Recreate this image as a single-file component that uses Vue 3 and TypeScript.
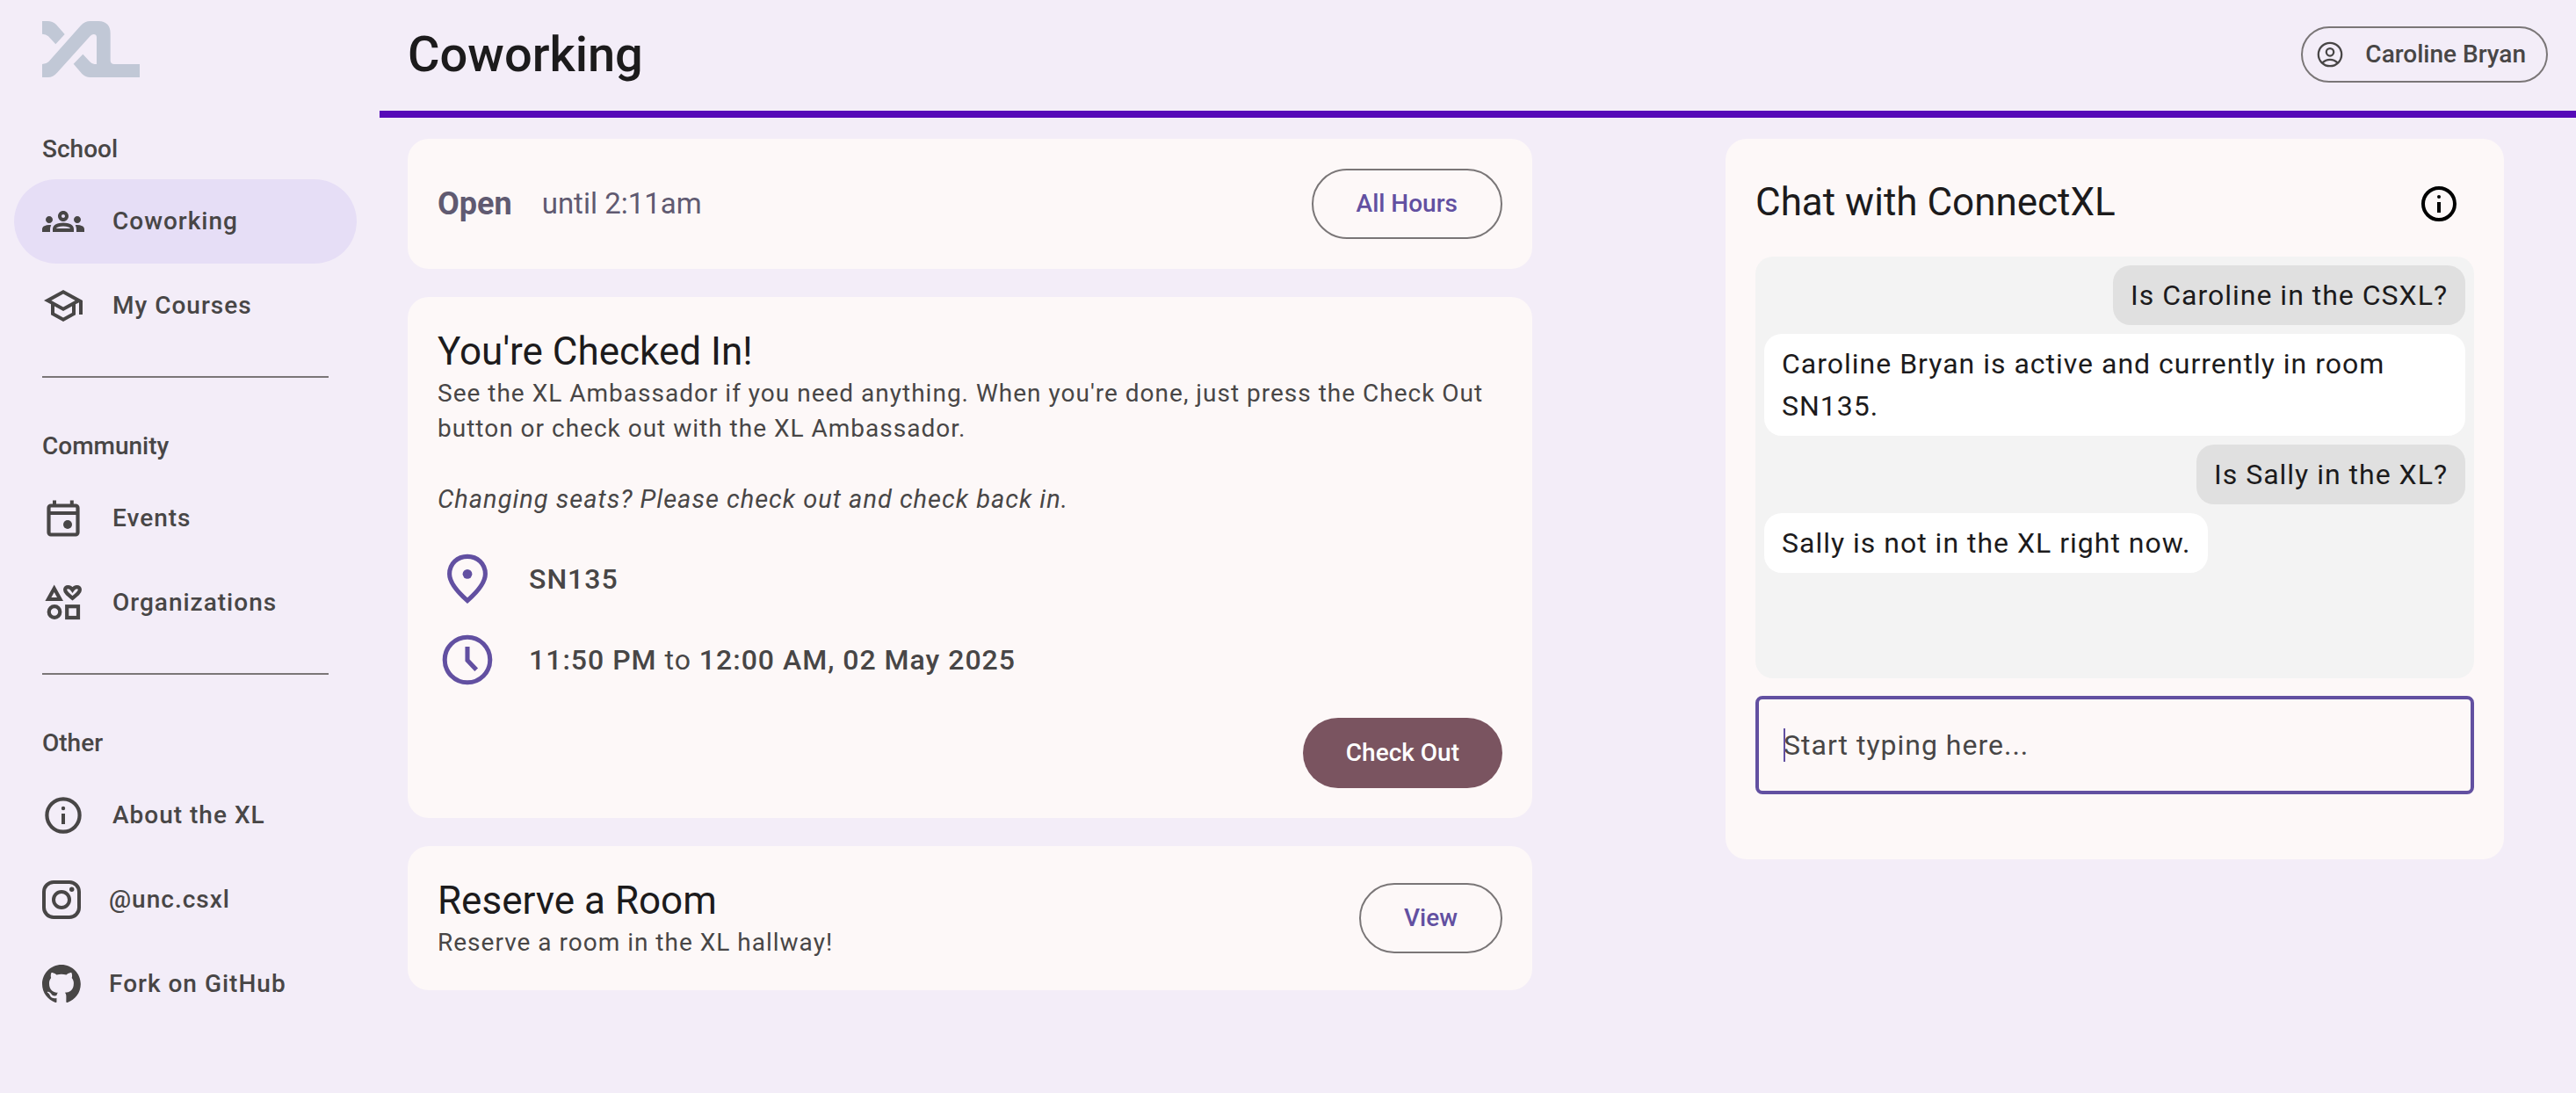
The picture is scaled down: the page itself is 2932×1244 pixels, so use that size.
<script setup lang="ts">
import { ref } from 'vue'

interface NavItem {
  label: string
  icon: string
  brand?: boolean
  active?: boolean
}

interface NavSection {
  title: string
  items: NavItem[]
}

interface Message {
  text: string
  from: 'user' | 'bot'
}

const sections: NavSection[] = [
  {
    title: 'School',
    items: [
      { label: 'Coworking', icon: 'groups', active: true },
      { label: 'My Courses', icon: 'school' },
    ],
  },
  {
    title: 'Community',
    items: [
      { label: 'Events', icon: 'event' },
      { label: 'Organizations', icon: 'category' },
    ],
  },
  {
    title: 'Other',
    items: [
      { label: 'About the XL', icon: 'info' },
      { label: '@unc.csxl', icon: 'instagram', brand: true },
      { label: 'Fork on GitHub', icon: 'github', brand: true },
    ],
  },
]

const messages: Message[] = [
  { text: 'Is Caroline in the CSXL?', from: 'user' },
  { text: 'Caroline Bryan is active and currently in room SN135.', from: 'bot' },
  { text: 'Is Sally in the XL?', from: 'user' },
  { text: 'Sally is not in the XL right now.', from: 'bot' },
]

const draft = ref('')
</script>

<template>
  <div class="shell">
    <aside class="sidebar">
      <a class="logo" href="#" aria-label="XL home">
        <svg viewBox="144 72 333 192" aria-hidden="true">
          <path d="M144 72H162Q180 72 192 84L221 117L190 151L165 124Q157 117 144 116Z" />
          <path
            d="M144 219Q158 219 166 211L276 87Q290 72 308 72H336Q377 74 377 114V208Q378 219 390 219H477V264H308Q292 264 280 252L251 218L283 185L307 211Q314 219 322 219H330V126Q329 117 320 117Q314 117 308 123L195 248Q181 264 164 264H144Z"
          />
        </svg>
      </a>

      <nav>
        <section v-for="section in sections" :key="section.title" class="nav-section">
          <h2>{{ section.title }}</h2>
          <a
            v-for="item in section.items"
            :key="item.label"
            href="#"
            class="nav-item"
            :class="{ active: item.active }"
          >
            <svg v-if="item.icon === 'groups'" class="icon" viewBox="0 0 24 24" aria-hidden="true">
              <path
                d="M4 13c1.1 0 2-.9 2-2s-.9-2-2-2-2 .9-2 2 .9 2 2 2zm1.13 1.1c-.37-.06-.74-.1-1.13-.1-.99 0-1.93.21-2.78.58C.48 14.9 0 15.62 0 16.43V18h4.5v-1.61c0-.83.23-1.61.63-2.29zM20 13c1.1 0 2-.9 2-2s-.9-2-2-2-2 .9-2 2 .9 2 2 2zm4 3.43c0-.81-.48-1.53-1.22-1.85-.85-.37-1.79-.58-2.78-.58-.39 0-.76.04-1.13.1.4.68.63 1.46.63 2.29V18H24v-1.57zm-7.76-2.78c-1.17-.52-2.61-.9-4.24-.9-1.63 0-3.07.39-4.24.9C6.68 14.13 6 15.21 6 16.39V18h12v-1.61c0-1.18-.68-2.26-1.76-2.74zM8.07 16c.09-.23.13-.39.91-.69.97-.38 1.99-.56 3.02-.56s2.05.18 3.02.56c.77.3.81.46.91.69H8.07zM12 8c.55 0 1 .45 1 1s-.45 1-1 1-1-.45-1-1 .45-1 1-1m0-2c-1.66 0-3 1.34-3 3s1.34 3 3 3 3-1.34 3-3-1.34-3-3-3z"
              />
            </svg>
            <svg v-else-if="item.icon === 'school'" class="icon" viewBox="0 0 24 24" aria-hidden="true">
              <path
                d="M12 3L1 9l4 2.18v6L12 21l7-3.82v-6l2-1.09V17h2V9L12 3zm6.82 6L12 12.72 5.18 9 12 5.28 18.82 9zM17 15.99l-5 2.73-5-2.73v-3.72L12 15l5-2.73v3.72z"
              />
            </svg>
            <svg v-else-if="item.icon === 'event'" class="icon" viewBox="0 0 24 24" aria-hidden="true">
              <rect class="line" x="3.75" y="4.75" width="16.5" height="16.5" rx="1.2" />
              <path d="M3.8 8h16.4v2H3.8zM6 1.7h2v2.6H6zM15.9 1.7h2v2.6h-2z" />
              <circle cx="14.5" cy="15.5" r="2.5" />
            </svg>
            <svg v-else-if="item.icon === 'category'" class="icon" viewBox="0 0 24 24" aria-hidden="true">
              <path fill-rule="evenodd" d="M6.85 1.7L12 11H1.7zM6.85 6L5.2 9h3.3z" />
              <circle class="line" cx="7" cy="17.25" r="3.15" />
              <rect class="line" x="14.1" y="14.1" width="6.4" height="6.4" />
              <path
                class="line"
                d="M17.25 9.4C14.7 7.3 13.05 6 13.05 4.6C13.05 3.6 13.8 3.05 14.7 3.05C15.9 3.05 16.7 3.9 17.25 4.7C17.8 3.9 18.6 3.05 19.8 3.05C20.7 3.05 21.45 3.6 21.45 4.6C21.45 6 19.8 7.3 17.25 9.4Z"
              />
            </svg>
            <svg v-else-if="item.icon === 'info'" class="icon" viewBox="0 0 24 24" aria-hidden="true">
              <circle class="line" cx="12" cy="12" r="9.3" />
              <circle cx="12" cy="8" r="1.1" />
              <path d="M11 11h2v6h-2z" />
            </svg>
            <svg v-else-if="item.icon === 'instagram'" class="icon brand" viewBox="0 0 44 44" aria-hidden="true">
              <rect class="thick" x="2" y="2" width="40" height="40" rx="11" />
              <circle class="thick" cx="22" cy="22" r="9" />
              <circle cx="33.7" cy="10.3" r="2.7" />
            </svg>
            <svg v-else class="icon brand" viewBox="0 0 98 98" aria-hidden="true">
              <path
                d="M48.854 0C21.839 0 0 22 0 49.217c0 21.756 13.993 40.172 33.405 46.69 2.427.49 3.316-1.059 3.316-2.362 0-1.141-.08-5.052-.08-9.127-13.59 2.934-16.42-5.867-16.42-5.867-2.184-5.704-5.42-7.17-5.42-7.17-4.448-3.015.324-3.015.324-3.015 4.934.326 7.523 5.052 7.523 5.052 4.367 7.496 11.404 5.378 14.235 4.074.404-3.178 1.699-5.378 3.074-6.6-10.839-1.141-22.243-5.378-22.243-24.283 0-5.378 1.94-9.778 5.014-13.2-.485-1.222-2.184-6.275.486-13.038 0 0 4.125-1.304 13.426 5.052a46.97 46.97 0 0 1 12.214-1.63c4.125 0 8.33.571 12.213 1.63 9.302-6.356 13.427-5.052 13.427-5.052 2.67 6.763.97 11.816.485 13.038 3.155 3.422 5.015 7.822 5.015 13.2 0 18.905-11.404 23.06-22.324 24.283 1.78 1.548 3.316 4.481 3.316 9.126 0 6.6-.08 11.897-.08 13.526 0 1.304.89 2.853 3.316 2.364 19.412-6.52 33.405-24.935 33.405-46.691C97.707 22 75.788 0 48.854 0z"
              />
            </svg>
            <span>{{ item.label }}</span>
          </a>
        </section>
      </nav>
    </aside>

    <div class="page">
      <header class="topbar">
        <h1>Coworking</h1>
        <button type="button" class="profile">
          <svg viewBox="0 0 24 24" aria-hidden="true">
            <circle cx="12" cy="12" r="8.8" />
            <circle cx="12" cy="10.2" r="2.8" />
            <path d="M6.2 18.4Q8.7 15.9 12 15.9T17.8 18.4" />
          </svg>
          <span>Caroline Bryan</span>
        </button>
      </header>

      <main class="content">
        <div class="column">
          <section class="card row">
            <p class="hours"><strong>Open</strong><span>until 2:11am</span></p>
            <button type="button" class="outlined">All Hours</button>
          </section>

          <section class="card">
            <h2>You're Checked In!</h2>
            <p class="body">
              See the XL Ambassador if you need anything. When you're done, just press the Check Out
              button or check out with the XL Ambassador.
            </p>
            <p class="body note"><em>Changing seats? Please check out and check back in.</em></p>
            <div class="details">
              <div class="detail">
                <svg viewBox="0 0 24 24" aria-hidden="true">
                  <path d="M12 20.7Q4.8 14.4 4.8 10C4.8 5.7 8 2.95 12 2.95S19.2 5.7 19.2 10Q19.2 14.4 12 20.7Z" />
                  <circle class="dot" cx="12" cy="10" r="1.9" />
                </svg>
                <span><b>SN135</b></span>
              </div>
              <div class="detail">
                <svg viewBox="0 0 24 24" aria-hidden="true">
                  <circle cx="12" cy="12" r="9.1" />
                  <path d="M12 6.7V12.2L15.6 16" />
                </svg>
                <span><b>11:50 PM</b> to <b>12:00 AM, 02 May 2025</b></span>
              </div>
            </div>
            <div class="actions">
              <button type="button" class="filled">Check Out</button>
            </div>
          </section>

          <section class="card row">
            <div>
              <h2>Reserve a Room</h2>
              <p class="body">Reserve a room in the XL hallway!</p>
            </div>
            <button type="button" class="outlined">View</button>
          </section>
        </div>

        <section class="card chat">
          <div class="chat-head">
            <h2>Chat with ConnectXL</h2>
            <button type="button" class="info" aria-label="About ConnectXL">
              <svg viewBox="0 0 24 24" aria-hidden="true">
                <circle class="ring" cx="12" cy="12" r="9" />
                <circle cx="12" cy="8" r="1" />
                <path d="M11 11h2v6h-2z" />
              </svg>
            </button>
          </div>
          <div class="messages">
            <p v-for="message in messages" :key="message.text" class="bubble" :class="message.from">
              {{ message.text }}
            </p>
          </div>
          <div class="field">
            <input v-model="draft" type="text" placeholder="Start typing here..." aria-label="Message" />
            <span class="caret" aria-hidden="true"></span>
          </div>
        </section>
      </main>
    </div>
  </div>
</template>

<style>
body {
  margin: 0;
  background: #f3edf8;
}
</style>

<style scoped>
.shell {
  display: flex;
  min-height: 100vh;
  background: #f3edf8;
  color: #1c1b1c;
  font-family: Roboto, 'Liberation Sans', sans-serif;
  font-size: 28px;
  line-height: 40px;
}

h1,
h2,
p {
  margin: 0;
}

button,
input {
  font: inherit;
  color: inherit;
  box-sizing: border-box;
}

button {
  background: transparent;
  cursor: pointer;
}

b {
  font-weight: 500;
}

/* Sidebar */
.sidebar {
  flex: 0 0 432px;
  box-sizing: border-box;
  padding: 24px 26px 32px 16px;
  color: #484646;
}

.logo {
  display: block;
  width: 111px;
  height: 64px;
  margin: 0 0 62px 32px;
}

.logo svg {
  display: block;
  width: 100%;
  height: 100%;
  fill: #c1c8d6;
}

.nav-section + .nav-section::before {
  content: '';
  display: block;
  height: 2px;
  margin: 32px 32px 58px;
  background: #7a7677;
}

.nav-section h2 {
  margin: 0 32px 14px;
  font-size: 28px;
  line-height: 40px;
  font-weight: 500;
}

.nav-item {
  display: flex;
  align-items: center;
  gap: 32px;
  height: 96px;
  padding: 0 32px;
  border-radius: 48px;
  color: inherit;
  font-weight: 500;
  letter-spacing: 1px;
  text-decoration: none;
}

.nav-item.active {
  background: #e6def6;
}

.icon {
  flex: none;
  width: 48px;
  height: 48px;
  fill: currentColor;
}

.icon.brand {
  width: 44px;
  height: 44px;
}

.icon .line {
  fill: none;
  stroke: currentColor;
  stroke-width: 2.1;
}

.icon .thick {
  fill: none;
  stroke: currentColor;
  stroke-width: 4;
}

/* Top bar */
.page {
  flex: 1;
  min-width: 0;
}

.topbar {
  display: flex;
  align-items: center;
  justify-content: space-between;
  padding: 30px 32px 32px;
  border-bottom: 8px solid #560ab8;
}

h1 {
  font-size: 56px;
  line-height: 64px;
  font-weight: 500;
}

.profile {
  display: flex;
  align-items: center;
  gap: 22px;
  height: 64px;
  padding: 0 23px 0 13px;
  border: 2px solid #7a7677;
  border-radius: 32px;
  color: #484646;
  font-weight: 500;
}

.profile svg {
  width: 36px;
  height: 36px;
  fill: none;
  stroke: currentColor;
  stroke-width: 1.5;
}

/* Content */
.content {
  display: grid;
  grid-template-columns: minmax(0, 1280fr) minmax(0, 886fr);
  align-items: start;
  gap: 220px;
  padding: 24px 82px 24px 32px;
}

.column {
  display: flex;
  flex-direction: column;
  gap: 32px;
}

.card {
  padding: 34px;
  border-radius: 24px;
  background: #fdf8f8;
}

.card h2 {
  font-size: 44px;
  line-height: 56px;
  font-weight: 400;
}

.row {
  display: flex;
  align-items: center;
  justify-content: space-between;
}

.hours {
  display: flex;
  align-items: center;
  gap: 34px;
  color: #605a71;
  font-size: 33px;
}

.hours strong {
  font-size: 36px;
  font-weight: 700;
}

.outlined,
.filled {
  height: 80px;
  padding: 0 49px;
  border-radius: 40px;
  font-weight: 500;
}

.outlined {
  border: 2px solid #7a7677;
  color: #6250a1;
}

.filled {
  border: 0;
  background: #7a5460;
  color: #ffffff;
}

.body {
  color: #484646;
  letter-spacing: 1px;
}

.note {
  margin-top: 40px;
  font-size: 29px;
}

.details {
  display: flex;
  flex-direction: column;
  gap: 24px;
  margin-top: 37px;
}

.detail {
  display: flex;
  align-items: center;
  gap: 36px;
  color: #484646;
  font-size: 32px;
  letter-spacing: 1px;
}

.detail svg {
  flex: none;
  width: 68px;
  height: 68px;
  fill: none;
  stroke: #6250a1;
  stroke-width: 1.8;
}

.detail .dot {
  fill: #6250a1;
  stroke: none;
}

.actions {
  display: flex;
  justify-content: flex-end;
  margin-top: 32px;
}

/* Chat */
.chat {
  padding-bottom: 74px;
}

.chat-head {
  display: flex;
  align-items: center;
  justify-content: space-between;
}

.chat-head h2 {
  padding-bottom: 4px;
}

.info {
  display: grid;
  place-items: center;
  width: 80px;
  height: 80px;
  padding: 0;
  border: 0;
  border-radius: 40px;
  color: #000000;
}

.info svg {
  width: 48px;
  height: 48px;
  fill: currentColor;
}

.info .ring {
  fill: none;
  stroke: currentColor;
  stroke-width: 2;
}

.messages {
  display: flex;
  flex-direction: column;
  gap: 10px;
  min-height: 460px;
  margin: 20px 0;
  padding: 10px;
  border-radius: 20px;
  background: #f3f3f3;
}

.bubble {
  align-self: flex-start;
  padding: 10px 20px;
  border-radius: 20px;
  background: #ffffff;
  font-size: 32px;
  line-height: 48px;
  letter-spacing: 1px;
}

.bubble.user {
  align-self: flex-end;
  background: #e0e0e0;
}

.field {
  position: relative;
}

.field input {
  display: block;
  width: 100%;
  height: 112px;
  padding: 0 28px;
  border: 4px solid #6250a1;
  border-radius: 8px;
  outline: none;
  background: transparent;
  font-size: 32px;
  letter-spacing: 1px;
  caret-color: #6250a1;
}

.field input::placeholder {
  color: #484646;
  opacity: 1;
}

.caret {
  position: absolute;
  top: 37px;
  left: 32px;
  width: 2px;
  height: 38px;
  background: #6250a1;
}
</style>
